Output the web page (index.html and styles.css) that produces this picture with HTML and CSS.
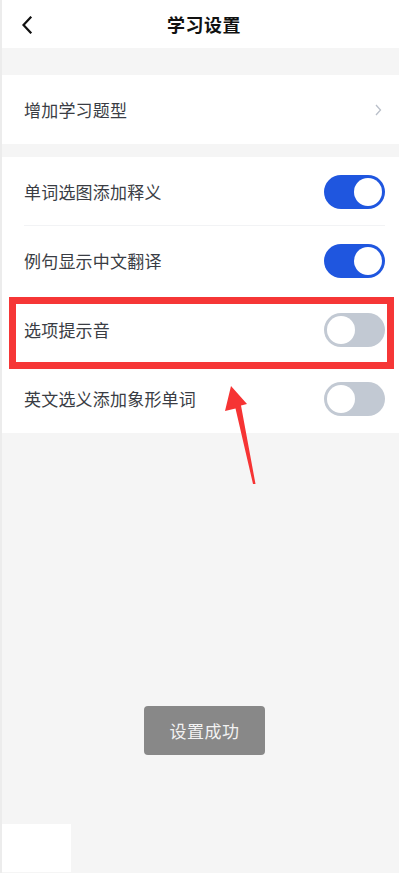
FILE: index.html
```html
<!DOCTYPE html>
<html lang="zh">
<head>
<meta charset="utf-8">
<link rel="stylesheet" href="styles.css">
</head>
<body>
<div class="page">
  <header class="header">
    <svg class="back" width="12" height="18" viewBox="0 0 12 18"><path d="M9.5 1.5 L2.5 9 L9.5 16.5" fill="none" stroke="#111" stroke-width="2.2" stroke-linecap="square" stroke-linejoin="miter"/></svg>
    <h1 class="title">学习设置</h1>
  </header>
  <section class="group group-first">
    <div class="row">
      <span class="label">增加学习题型</span>
      <svg class="chev" width="7" height="12" viewBox="0 0 7 12"><path d="M1 1 L5.5 6 L1 11" fill="none" stroke="#b9bfc9" stroke-width="1.3"/></svg>
    </div>
  </section>
  <section class="group group-second">
    <div class="row divided"><span class="label">单词选图添加释义</span><span class="toggle on"><span class="knob"></span></span></div>
    <div class="row"><span class="label">例句显示中文翻译</span><span class="toggle on"><span class="knob"></span></span></div>
    <div class="row"><span class="label">选项提示音</span><span class="toggle"><span class="knob"></span></span></div>
    <div class="row"><span class="label">英文选义添加象形单词</span><span class="toggle"><span class="knob"></span></span></div>
  </section>
  <div class="highlight"></div>
  <svg class="arrow" width="399" height="873" viewBox="0 0 399 873"><polygon points="231,386 247,404 241,405.5 255.5,484 253,484 235.5,408.5 225,411" fill="#f63434"/></svg>
  <div class="toast">设置成功</div>
  <div class="corner"></div>
</div>
</body>
</html>
```
FILE: styles.css
```css
* { box-sizing: border-box; margin: 0; padding: 0; }
html, body { width: 399px; height: 873px; overflow: hidden; }
body {
  background: #f5f5f5;
  font-family: "Noto Sans CJK SC", "Noto Sans", sans-serif;
  color: #333;
}
.page {
  position: relative;
  width: 399px;
  height: 873px;
  border-left: 2px solid #ececec;
}
.header {
  position: relative;
  height: 48px;
  background: #fff;
  display: flex;
  align-items: center;
  justify-content: center;
  padding-left: 7px;
}
.back {
  position: absolute;
  left: 19px;
  top: 16px;
}
.title {
  font-size: 18px;
  font-weight: 700;
  color: #111;
  letter-spacing: 0.5px;
}
.group { background: #fff; }
.group-first { margin-top: 27px; }
.group-second { margin-top: 13px; }
.row {
  height: 69px;
  display: flex;
  align-items: center;
  justify-content: space-between;
  padding: 0 14px 0 22px;
  position: relative;
}
.divided::after {
  content: "";
  position: absolute;
  left: 22px;
  right: 14px;
  bottom: 0;
  height: 1px;
  background: #f2f3f5;
}
.label {
  font-size: 17px;
  color: #3a3d44;
  letter-spacing: 0.2px;
}
.chev { margin-right: 3px; }
.toggle {
  width: 61px;
  height: 34px;
  border-radius: 17px;
  background: #c2c9d3;
  display: flex;
  align-items: center;
  padding: 0 3px;
}
.toggle .knob {
  width: 28px;
  height: 28px;
  border-radius: 50%;
  background: #fff;
}
.toggle.on {
  background: #1f56df;
  justify-content: flex-end;
}
.highlight {
  position: absolute;
  left: 7px;
  top: 297px;
  width: 385px;
  height: 72px;
  border: 7px solid #f63636;
}
.arrow {
  position: absolute;
  left: -2px;
  top: 0;
}
.toast {
  position: absolute;
  left: 142px;
  top: 706px;
  width: 121px;
  height: 49px;
  border-radius: 4px;
  background: #888888;
  color: #f2f2f2;
  font-size: 17px;
  display: flex;
  align-items: center;
  justify-content: center;
  letter-spacing: 0.5px;
}
.corner {
  position: absolute;
  left: 0;
  top: 824px;
  width: 69px;
  height: 48px;
  background: #fff;
}
```
